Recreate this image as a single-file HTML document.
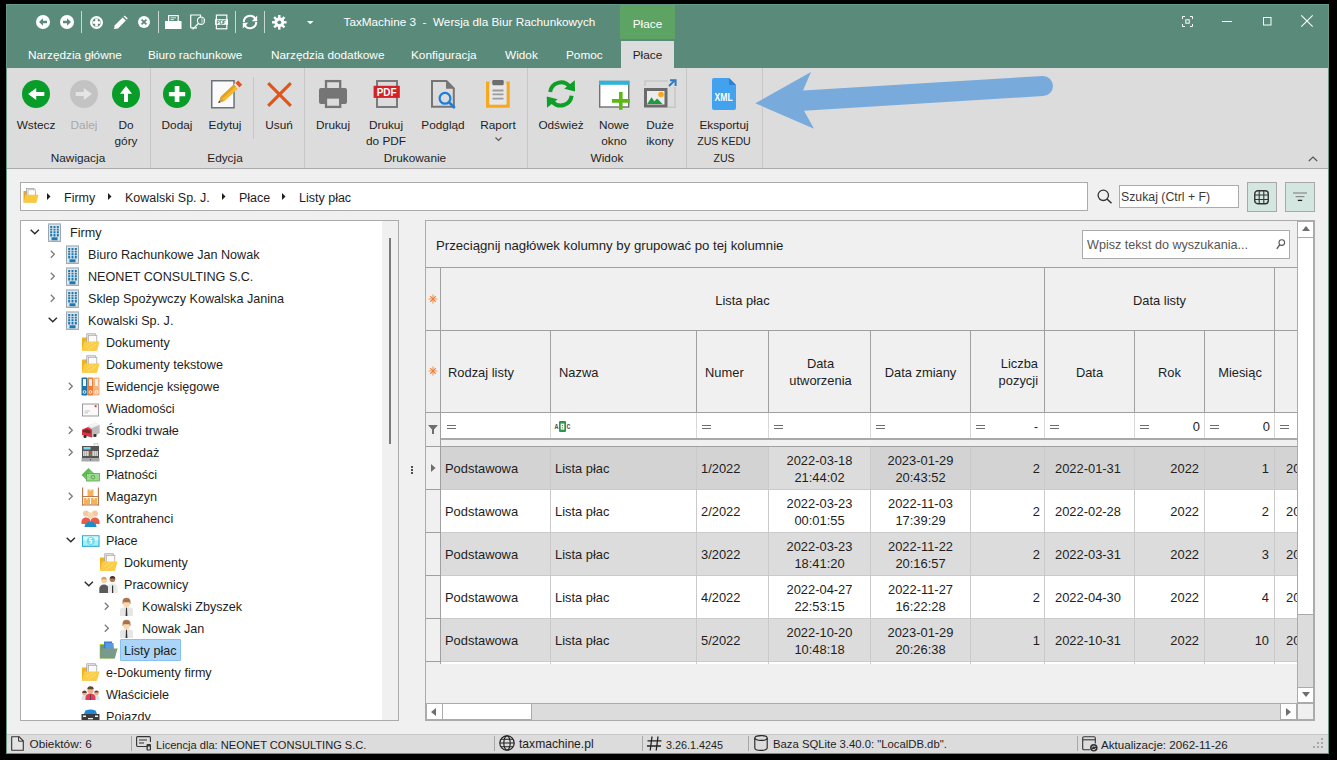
<!DOCTYPE html><html><head><meta charset="utf-8"><style>
html,body{margin:0;padding:0;width:1337px;height:760px;overflow:hidden;background:#000;}
.t{position:absolute;white-space:pre;font-family:"Liberation Sans",sans-serif;}
svg{overflow:visible}
</style></head><body>
<div style="position:absolute;left:6px;top:4px;width:1323px;height:750px;background:#f0f0f0;border:1px solid #66998a;box-sizing:border-box"></div>
<div style="position:absolute;left:7px;top:5px;width:1321px;height:63px;background:#5a8b7a;"></div>
<div style="position:absolute;left:620px;top:5px;width:55px;height:34px;background:#5ca364;"></div>
<div class="t" style="left:617.5px;width:60px;text-align:center;top:16.91px;font-size:11.8px;line-height:15px;color:#ffffff;">Płace</div>
<div style="position:absolute;left:621px;top:41px;width:53px;height:27px;background:#dcdcdc;"></div>
<div class="t" style="left:343.5px;top:14.43px;font-size:11.75px;line-height:15px;color:#ffffff;">TaxMachine 3  -  Wersja dla Biur Rachunkowych</div>
<div class="t" style="left:28px;top:48.41px;font-size:11.8px;line-height:15px;color:#ffffff;">Narzędzia główne</div>
<div class="t" style="left:148px;top:48.41px;font-size:11.8px;line-height:15px;color:#ffffff;">Biuro rachunkowe</div>
<div class="t" style="left:271px;top:48.41px;font-size:11.8px;line-height:15px;color:#ffffff;">Narzędzia dodatkowe</div>
<div class="t" style="left:411px;top:48.41px;font-size:11.8px;line-height:15px;color:#ffffff;">Konfiguracja</div>
<div class="t" style="left:505px;top:48.41px;font-size:11.8px;line-height:15px;color:#ffffff;">Widok</div>
<div class="t" style="left:566px;top:48.41px;font-size:11.8px;line-height:15px;color:#ffffff;">Pomoc</div>
<div class="t" style="left:617.5px;width:60px;text-align:center;top:48.41px;font-size:11.8px;line-height:15px;color:#1e1e1e;">Płace</div>
<svg style="position:absolute;left:36px;top:15px;" width="14" height="14" viewBox="0 0 14 14"><circle cx="7" cy="7" r="7" fill="#ffffff"/><path d="M3 7L7 3.2V5.8H11V8.2H7V10.8Z" fill="#5a8b7a"/></svg>
<svg style="position:absolute;left:60px;top:15px;" width="14" height="14" viewBox="0 0 14 14"><circle cx="7" cy="7" r="7" fill="#ffffff"/><path d="M11 7L7 3.2V5.8H3V8.2H7V10.8Z" fill="#5a8b7a"/></svg>
<div style="position:absolute;left:81px;top:11px;width:1px;height:22px;background:#c9d6d1;"></div>
<svg style="position:absolute;left:90px;top:16px;" width="13" height="13" viewBox="0 0 13 13"><circle cx="6.5" cy="6.5" r="5.4" fill="none" stroke="#ffffff" stroke-width="2.2"/><path d="M6.5 2.6V10.4M2.6 6.5H10.4" stroke="#ffffff" stroke-width="2.6"/></svg>
<svg style="position:absolute;left:114px;top:16px;" width="13" height="13" viewBox="0 0 13 13"><path d="M0 13L0.8 9.2L8.6 1.4L11.8 4.6L4 12.4Z" fill="#ffffff"/><path d="M9.6 0.4L10.6 -0.6L13.8 2.6L12.8 3.6Z" fill="#ffffff"/></svg>
<svg style="position:absolute;left:138px;top:16px;" width="13" height="13" viewBox="0 0 13 13"><circle cx="6" cy="6" r="6" fill="#ffffff"/><path d="M3.6 3.6L8.4 8.4M8.4 3.6L3.6 8.4" stroke="#5a8b7a" stroke-width="1.8"/></svg>
<div style="position:absolute;left:158px;top:11px;width:1px;height:22px;background:#c9d6d1;"></div>
<svg style="position:absolute;left:165px;top:14px;" width="17" height="16" viewBox="0 0 17 16"><rect x="3.6" y="1.6" width="9.6" height="8" fill="#5a8b7a" stroke="#ffffff" stroke-width="1.2"/><path d="M5.5 3.8H11M5.5 5.6H9M5.5 7.6H11" stroke="#ffffff" stroke-width="0.8"/><rect x="0" y="7" width="16.5" height="8" fill="#ffffff"/></svg>
<svg style="position:absolute;left:190px;top:14px;" width="16" height="16" viewBox="0 0 16 16"><path d="M0.7 13.8V1H10.5V3.5M7 13.8H0.7" fill="none" stroke="#ffffff" stroke-width="1.2"/><circle cx="11" cy="6.7" r="3.6" fill="#5a8b7a" stroke="#ffffff" stroke-width="1.2"/><path d="M11 3.5A3.2 3.2 0 0 1 11 9.9Z" fill="#8fb3a6"/><path d="M8.6 9.3L2.6 15.4" stroke="#ffffff" stroke-width="1.3"/></svg>
<svg style="position:absolute;left:215px;top:14px;" width="14" height="16" viewBox="0 0 14 16"><rect x="1.4" y="1.1" width="10.4" height="13.7" fill="none" stroke="#ffffff" stroke-width="1.2"/><rect x="0" y="5.2" width="13" height="5.6" fill="#ffffff"/><path d="M2.3 10V6.4H3.9A1 1 0 0 1 3.9 8.3H2.3M5.3 10V6.4H6.4A1.4 1.6 0 0 1 6.4 10Z M8.6 10V6.4H10.8M8.6 8.1H10.3" fill="none" stroke="#5a8b7a" stroke-width="0.9"/></svg>
<div style="position:absolute;left:235px;top:11px;width:1px;height:22px;background:#c9d6d1;"></div>
<svg style="position:absolute;left:242px;top:14px;" width="16" height="16" viewBox="0 0 16 16"><path d="M1.8 8A6.2 6.2 0 0 1 13.4 4.9M14.2 8A6.2 6.2 0 0 1 2.6 11.1" fill="none" stroke="#ffffff" stroke-width="2"/><path d="M15.2 1.5V7.3H9.8Z" fill="#ffffff"/><path d="M0.8 14.5V8.7H6.2Z" fill="#ffffff"/></svg>
<div style="position:absolute;left:264px;top:11px;width:1px;height:22px;background:#c9d6d1;"></div>
<svg style="position:absolute;left:272px;top:15px;" width="15" height="15" viewBox="0 0 15 15"><g fill="#ffffff"><rect x="6.1" y="0" width="2.4" height="4" transform="rotate(0 7.3 7.3)"/><rect x="6.1" y="0" width="2.4" height="4" transform="rotate(45 7.3 7.3)"/><rect x="6.1" y="0" width="2.4" height="4" transform="rotate(90 7.3 7.3)"/><rect x="6.1" y="0" width="2.4" height="4" transform="rotate(135 7.3 7.3)"/><rect x="6.1" y="0" width="2.4" height="4" transform="rotate(180 7.3 7.3)"/><rect x="6.1" y="0" width="2.4" height="4" transform="rotate(225 7.3 7.3)"/><rect x="6.1" y="0" width="2.4" height="4" transform="rotate(270 7.3 7.3)"/><rect x="6.1" y="0" width="2.4" height="4" transform="rotate(315 7.3 7.3)"/><circle cx="7.3" cy="7.3" r="4.9"/></g><circle cx="7.3" cy="7.3" r="1.9" fill="#5a8b7a"/></svg>
<svg style="position:absolute;left:307px;top:21px;" width="7" height="4" viewBox="0 0 7 4"><path d="M0 0H6.5L3.25 3.2Z" fill="#ffffff"/></svg>
<svg style="position:absolute;left:1182px;top:16px;" width="11" height="11" viewBox="0 0 11 11"><path d="M0.5 3V0.5H3M8 0.5H10.5V3M10.5 8V10.5H8M3 10.5H0.5V8" fill="none" stroke="#ffffff" stroke-width="1"/><rect x="3.8" y="3.8" width="3.4" height="3.4" fill="none" stroke="#ffffff" stroke-width="1"/></svg>
<div style="position:absolute;left:1222px;top:21px;width:10px;height:1px;background:#ffffff;"></div>
<svg style="position:absolute;left:1263px;top:17px;" width="9" height="9" viewBox="0 0 9 9"><rect x="0.5" y="0.5" width="7.5" height="7.5" fill="none" stroke="#ffffff" stroke-width="1"/></svg>
<svg style="position:absolute;left:1301px;top:15px;" width="12" height="12" viewBox="0 0 12 12"><path d="M0.3 0.3L11.7 11.7M11.7 0.3L0.3 11.7" stroke="#ffffff" stroke-width="1.1"/></svg>
<div style="position:absolute;left:7px;top:68px;width:1321px;height:100px;background:#dcdcdc;"></div>
<div style="position:absolute;left:7px;top:168px;width:1321px;height:1px;background:#ababab;"></div>
<div style="position:absolute;left:150px;top:68px;width:1px;height:100px;background:#c6c6c6;"></div>
<div style="position:absolute;left:304px;top:68px;width:1px;height:100px;background:#c6c6c6;"></div>
<div style="position:absolute;left:527px;top:68px;width:1px;height:100px;background:#c6c6c6;"></div>
<div style="position:absolute;left:686px;top:68px;width:1px;height:100px;background:#c6c6c6;"></div>
<div style="position:absolute;left:762px;top:68px;width:1px;height:100px;background:#c6c6c6;"></div>
<div style="position:absolute;left:253px;top:77px;width:1px;height:62px;background:#c6c6c6;"></div>
<div class="t" style="left:-9.0px;width:90px;text-align:center;top:118.41px;font-size:11.8px;line-height:15px;color:#1e1e1e;">Wstecz</div>
<div class="t" style="left:39.0px;width:90px;text-align:center;top:118.41px;font-size:11.8px;line-height:15px;color:#a8a8a8;">Dalej</div>
<div class="t" style="left:81.0px;width:90px;text-align:center;top:118.41px;font-size:11.8px;line-height:15px;color:#1e1e1e;">Do</div>
<div class="t" style="left:81.0px;width:90px;text-align:center;top:133.91px;font-size:11.8px;line-height:15px;color:#1e1e1e;">góry</div>
<div class="t" style="left:132.0px;width:90px;text-align:center;top:118.41px;font-size:11.8px;line-height:15px;color:#1e1e1e;">Dodaj</div>
<div class="t" style="left:180.0px;width:90px;text-align:center;top:118.41px;font-size:11.8px;line-height:15px;color:#1e1e1e;">Edytuj</div>
<div class="t" style="left:234.0px;width:90px;text-align:center;top:118.41px;font-size:11.8px;line-height:15px;color:#1e1e1e;">Usuń</div>
<div class="t" style="left:288.0px;width:90px;text-align:center;top:118.41px;font-size:11.8px;line-height:15px;color:#1e1e1e;">Drukuj</div>
<div class="t" style="left:341.0px;width:90px;text-align:center;top:118.41px;font-size:11.8px;line-height:15px;color:#1e1e1e;">Drukuj</div>
<div class="t" style="left:341.0px;width:90px;text-align:center;top:133.91px;font-size:11.8px;line-height:15px;color:#1e1e1e;">do PDF</div>
<div class="t" style="left:398.0px;width:90px;text-align:center;top:118.41px;font-size:11.8px;line-height:15px;color:#1e1e1e;">Podgląd</div>
<div class="t" style="left:453.0px;width:90px;text-align:center;top:118.41px;font-size:11.8px;line-height:15px;color:#1e1e1e;">Raport</div>
<div class="t" style="left:516.0px;width:90px;text-align:center;top:118.41px;font-size:11.8px;line-height:15px;color:#1e1e1e;">Odśwież</div>
<div class="t" style="left:569.0px;width:90px;text-align:center;top:118.41px;font-size:11.8px;line-height:15px;color:#1e1e1e;">Nowe</div>
<div class="t" style="left:569.0px;width:90px;text-align:center;top:133.91px;font-size:11.8px;line-height:15px;color:#1e1e1e;">okno</div>
<div class="t" style="left:615.0px;width:90px;text-align:center;top:118.41px;font-size:11.8px;line-height:15px;color:#1e1e1e;">Duże</div>
<div class="t" style="left:615.0px;width:90px;text-align:center;top:133.91px;font-size:11.8px;line-height:15px;color:#1e1e1e;">ikony</div>
<div class="t" style="left:679.0px;width:90px;text-align:center;top:118.41px;font-size:11.8px;line-height:15px;color:#1e1e1e;">Eksportuj</div>
<div class="t" style="left:679.0px;width:90px;text-align:center;top:133.53px;font-size:10.6px;line-height:14px;color:#1e1e1e;">ZUS KEDU</div>
<div class="t" style="left:18.0px;width:120px;text-align:center;top:151.41px;font-size:11.8px;line-height:15px;color:#1e1e1e;">Nawigacja</div>
<div class="t" style="left:165.0px;width:120px;text-align:center;top:151.41px;font-size:11.8px;line-height:15px;color:#1e1e1e;">Edycja</div>
<div class="t" style="left:355.0px;width:120px;text-align:center;top:151.41px;font-size:11.8px;line-height:15px;color:#1e1e1e;">Drukowanie</div>
<div class="t" style="left:547.0px;width:120px;text-align:center;top:151.41px;font-size:11.8px;line-height:15px;color:#1e1e1e;">Widok</div>
<div class="t" style="left:664.0px;width:120px;text-align:center;top:150.83px;font-size:10.6px;line-height:14px;color:#1e1e1e;">ZUS</div>
<svg style="position:absolute;left:22px;top:80px;" width="28" height="28" viewBox="0 0 28 28"><circle cx="14" cy="14" r="14" fill="#079d28"/><path d="M6.1 14L14.2 7.9V12H22.3V16H14.2V20.1Z" fill="#ffffff"/></svg>
<svg style="position:absolute;left:70px;top:80px;" width="28" height="28" viewBox="0 0 28 28"><circle cx="14" cy="14" r="14" fill="#c3c3c3"/><path d="M21.9 14L13.8 7.9V12H5.7V16H13.8V20.1Z" fill="#e4e4e4"/></svg>
<svg style="position:absolute;left:112px;top:80px;" width="28" height="28" viewBox="0 0 28 28"><circle cx="14" cy="14" r="14" fill="#079d28"/><path d="M14 6L20 13.7H16V22H12V13.7H8Z" fill="#ffffff"/></svg>
<svg style="position:absolute;left:163px;top:80px;" width="28" height="28" viewBox="0 0 28 28"><circle cx="14" cy="14" r="14" fill="#079d28"/><path d="M11.7 6H16.4V12H22.2V16.2H16.4V22H11.7V16.2H5.9V12H11.7Z" fill="#ffffff"/></svg>
<svg style="position:absolute;left:211px;top:80px;" width="30" height="29" viewBox="0 0 30 29"><rect x="0.75" y="0.75" width="22.3" height="27" fill="#fafafa" stroke="#6d7278" stroke-width="1.5"/><g transform="translate(29.2,2.6) rotate(137)"><rect x="0" y="-2.9" width="4" height="5.8" fill="#e8501e"/><rect x="4" y="-2.9" width="2" height="5.8" fill="#e8e8e8"/><rect x="6" y="-2.9" width="18" height="5.8" fill="#f6b92a"/><rect x="6" y="0.3" width="18" height="2.6" fill="#e4a21f"/><path d="M24 -2.9L30 0L24 2.9Z" fill="#d4a04a"/><path d="M27.8 -1.1L30 0L27.8 1.1Z" fill="#333"/></g></svg>
<svg style="position:absolute;left:267px;top:82px;" width="25" height="25" viewBox="0 0 25 25"><path d="M1.2 1.2L23.8 23.8M23.8 1.2L1.2 23.8" stroke="#e35419" stroke-width="3.1"/></svg>
<svg style="position:absolute;left:319px;top:80px;" width="28" height="28" viewBox="0 0 28 28"><rect x="7" y="1.1" width="14.2" height="9" fill="none" stroke="#757575" stroke-width="2.3"/><rect x="0" y="8" width="28" height="16" rx="2" fill="#757575"/><rect x="7" y="17.5" width="14.2" height="9.4" fill="#dcdcdc" stroke="#757575" stroke-width="2.3"/></svg>
<svg style="position:absolute;left:373px;top:80px;" width="28" height="28" viewBox="0 0 28 28"><rect x="4" y="1" width="20" height="26" fill="none" stroke="#7a7a7a" stroke-width="2"/><rect x="0.6" y="5.8" width="26.2" height="12.1" fill="#d42027"/><text x="13.7" y="15.8" font-family="Liberation Sans" font-weight="bold" font-size="10" fill="#ffffff" text-anchor="middle">PDF</text></svg>
<svg style="position:absolute;left:431px;top:80px;" width="26" height="30" viewBox="0 0 26 30"><path d="M1 1H15.5L22.8 8.3V26.8H1Z" fill="none" stroke="#757575" stroke-width="2"/><path d="M15 0L23.8 8.8H15Z" fill="#757575"/><circle cx="14" cy="18.3" r="5.4" fill="none" stroke="#1a7ee0" stroke-width="2.2"/><path d="M17.8 22.1L23.8 28" stroke="#1a7ee0" stroke-width="2.6"/></svg>
<svg style="position:absolute;left:486px;top:80px;" width="25" height="28" viewBox="0 0 25 28"><path d="M1.7 1.5V26.2H22.1V1.5" fill="none" stroke="#f9a81a" stroke-width="3.3"/><rect x="3.4" y="4" width="17" height="20.5" fill="#e7e7e7"/><rect x="6.3" y="0" width="11.4" height="5.2" rx="1.2" fill="#6e6e6e"/><path d="M6.5 10.5H17.5M6.5 14.4H17.5M6.5 18.6H17.5" stroke="#9b9b9b" stroke-width="1.8"/></svg>
<svg style="position:absolute;left:546px;top:79px;" width="30" height="30" viewBox="0 0 30 30"><path d="M4.2 13A11 11 0 0 1 23.5 7.2" fill="none" stroke="#0f9e27" stroke-width="4"/><path d="M25.6 16.8A11 11 0 0 1 6.3 22.6" fill="none" stroke="#0f9e27" stroke-width="4"/><path d="M18.2 9.8L29 12.5L28.8 1.3Z" fill="#0f9e27"/><path d="M11.6 20.2L0.8 17.5L1 28.7Z" fill="#0f9e27"/></svg>
<svg style="position:absolute;left:599px;top:80px;" width="32" height="31" viewBox="0 0 32 31"><rect x="0.7" y="1.5" width="29" height="25.5" fill="#ffffff" stroke="#707070" stroke-width="1.4"/><rect x="0" y="0.8" width="30.4" height="4" fill="#2cb5d9"/><path d="M21.8 12V29.8M12.9 20.9H30.8" stroke="#5cb814" stroke-width="3.6"/></svg>
<svg style="position:absolute;left:644px;top:80px;" width="33" height="29" viewBox="0 0 33 29"><path d="M1 6V1H24M31 7V27.2H24" fill="none" stroke="#c6c6c6" stroke-width="1.5"/><rect x="1.5" y="9.5" width="20.5" height="16.5" fill="#ececec" stroke="#6b6b6b" stroke-width="3"/><path d="M7.5 24H18.5L13.2 18.5Z" fill="#1e9b3c"/><path d="M3.2 24H12L7.6 17.2Z" fill="#1e9b3c"/><circle cx="17" cy="14.5" r="2.8" fill="#f9a81a"/><path d="M25 6L30.5 0.6M26 0.3H31.6V6" fill="none" stroke="#2f7cc0" stroke-width="2"/></svg>
<svg style="position:absolute;left:712px;top:78px;" width="24" height="32" viewBox="0 0 24 32"><path d="M2 0H17L24 7V30A2 2 0 0 1 22 32H2A2 2 0 0 1 0 30V2A2 2 0 0 1 2 0Z" fill="#42a2ee"/><path d="M17 0L24 7H17Z" fill="#2a84d6"/><text x="2.6" y="23.2" font-family="Liberation Sans" font-weight="bold" font-size="10.2" fill="#ffffff" textLength="18" lengthAdjust="spacingAndGlyphs">XML</text></svg>
<svg style="position:absolute;left:495px;top:137px;" width="7" height="4" viewBox="0 0 7 4"><path d="M0.5 0.5L3.5 3.5L6.5 0.5" fill="none" stroke="#555" stroke-width="1.1"/></svg>
<svg style="position:absolute;left:740px;top:60px;" width="330" height="80" viewBox="0 0 330 80"><path d="M15.3 43.3L71 12L63 30.4L303 16A10 10 0 0 1 303 36L64 50.7L74 68.7Z" fill="#78aadc"/></svg>
<svg style="position:absolute;left:1308px;top:156px;" width="10" height="6" viewBox="0 0 10 6"><path d="M0.8 5L5 1L9.2 5" fill="none" stroke="#555" stroke-width="1.2"/></svg>
<div style="position:absolute;left:20px;top:182px;width:1068px;height:29px;background:#ffffff;border:1px solid #ababab;box-sizing:border-box"></div>
<div class="t" style="left:64px;top:189.87px;font-size:12.5px;line-height:16px;color:#1e1e1e;">Firmy</div>
<div class="t" style="left:125px;top:189.87px;font-size:12.5px;line-height:16px;color:#1e1e1e;">Kowalski Sp. J.</div>
<div class="t" style="left:239px;top:189.87px;font-size:12.5px;line-height:16px;color:#1e1e1e;">Płace</div>
<div class="t" style="left:299px;top:189.87px;font-size:12.5px;line-height:16px;color:#1e1e1e;">Listy płac</div>
<div style="position:absolute;left:1119px;top:185px;width:120px;height:23px;background:#ffffff;border:1px solid #ababab;box-sizing:border-box"></div>
<div class="t" style="left:1121px;top:188.74px;font-size:12.3px;line-height:16px;color:#3a3a3a;">Szukaj (Ctrl + F)</div>
<div style="position:absolute;left:1247px;top:182px;width:30px;height:30px;background:#d3e6df;border:1px solid #a8a8a8;box-sizing:border-box"></div>
<div style="position:absolute;left:1285px;top:182px;width:30px;height:30px;background:#d3e6df;border:1px solid #a8a8a8;box-sizing:border-box"></div>
<div style="position:absolute;left:20px;top:220px;width:379px;height:501px;background:#ffffff;border:1px solid #ababab;box-sizing:border-box"></div>
<div style="position:absolute;left:382px;top:221px;width:16px;height:499px;background:#f0f0f0;"></div>
<div style="position:absolute;left:389px;top:238px;width:2px;height:206px;background:#7a7a7a;"></div>
<div style="position:absolute;left:21px;top:221px;width:361px;height:499px;overflow:hidden">
<div class="t" style="left:49px;top:3.63px;font-size:12.6px;line-height:16px;color:#1e1e1e;">Firmy</div>
<svg style="position:absolute;left:24px;top:1.5px" width="19" height="19" viewBox="0 0 19 19"><rect x="3" y="0.5" width="13" height="1.2" fill="#8a9aa4"/><rect x="3.5" y="1.7" width="12" height="15.5" fill="#dfe7ec"/><rect x="3" y="1.7" width="1" height="16" fill="#9aa6ae"/><rect x="15" y="1.7" width="1" height="16" fill="#9aa6ae"/><g fill="#1b78b5"><rect x="5.2" y="3" width="2" height="10.5"/><rect x="8.5" y="3" width="2" height="10.5"/><rect x="11.8" y="3" width="2" height="10.5"/></g><g fill="#dfe7ec"><rect x="4" y="5" width="11" height="0.7"/><rect x="4" y="7.5" width="11" height="0.7"/><rect x="4" y="10" width="11" height="0.7"/></g><rect x="6.5" y="14.3" width="6" height="3" fill="#1b78b5"/><rect x="3" y="17.6" width="13" height="1.2" fill="#8a9aa4"/></svg>
<svg style="position:absolute;left:9.0px;top:8px;" width="10" height="6" viewBox="0 0 10 6"><path d="M0.7 0.8L4.8 4.8L8.9 0.8" fill="none" stroke="#2a2a2a" stroke-width="1.4"/></svg>
<div class="t" style="left:67px;top:25.63px;font-size:12.6px;line-height:16px;color:#1e1e1e;">Biuro Rachunkowe Jan Nowak</div>
<svg style="position:absolute;left:42px;top:23.5px" width="19" height="19" viewBox="0 0 19 19"><rect x="3" y="0.5" width="13" height="1.2" fill="#8a9aa4"/><rect x="3.5" y="1.7" width="12" height="15.5" fill="#dfe7ec"/><rect x="3" y="1.7" width="1" height="16" fill="#9aa6ae"/><rect x="15" y="1.7" width="1" height="16" fill="#9aa6ae"/><g fill="#1b78b5"><rect x="5.2" y="3" width="2" height="10.5"/><rect x="8.5" y="3" width="2" height="10.5"/><rect x="11.8" y="3" width="2" height="10.5"/></g><g fill="#dfe7ec"><rect x="4" y="5" width="11" height="0.7"/><rect x="4" y="7.5" width="11" height="0.7"/><rect x="4" y="10" width="11" height="0.7"/></g><rect x="6.5" y="14.3" width="6" height="3" fill="#1b78b5"/><rect x="3" y="17.6" width="13" height="1.2" fill="#8a9aa4"/></svg>
<svg style="position:absolute;left:29.0px;top:29px;" width="6" height="9" viewBox="0 0 6 9"><path d="M0.8 0.8L4.3 4.3L0.8 7.8" fill="none" stroke="#7a7a7a" stroke-width="1.3"/></svg>
<div class="t" style="left:67px;top:47.63px;font-size:12.6px;line-height:16px;color:#1e1e1e;">NEONET CONSULTING S.C.</div>
<svg style="position:absolute;left:42px;top:45.5px" width="19" height="19" viewBox="0 0 19 19"><rect x="3" y="0.5" width="13" height="1.2" fill="#8a9aa4"/><rect x="3.5" y="1.7" width="12" height="15.5" fill="#dfe7ec"/><rect x="3" y="1.7" width="1" height="16" fill="#9aa6ae"/><rect x="15" y="1.7" width="1" height="16" fill="#9aa6ae"/><g fill="#1b78b5"><rect x="5.2" y="3" width="2" height="10.5"/><rect x="8.5" y="3" width="2" height="10.5"/><rect x="11.8" y="3" width="2" height="10.5"/></g><g fill="#dfe7ec"><rect x="4" y="5" width="11" height="0.7"/><rect x="4" y="7.5" width="11" height="0.7"/><rect x="4" y="10" width="11" height="0.7"/></g><rect x="6.5" y="14.3" width="6" height="3" fill="#1b78b5"/><rect x="3" y="17.6" width="13" height="1.2" fill="#8a9aa4"/></svg>
<svg style="position:absolute;left:29.0px;top:51px;" width="6" height="9" viewBox="0 0 6 9"><path d="M0.8 0.8L4.3 4.3L0.8 7.8" fill="none" stroke="#7a7a7a" stroke-width="1.3"/></svg>
<div class="t" style="left:67px;top:69.63px;font-size:12.6px;line-height:16px;color:#1e1e1e;">Sklep Spożywczy Kowalska Janina</div>
<svg style="position:absolute;left:42px;top:67.5px" width="19" height="19" viewBox="0 0 19 19"><rect x="3" y="0.5" width="13" height="1.2" fill="#8a9aa4"/><rect x="3.5" y="1.7" width="12" height="15.5" fill="#dfe7ec"/><rect x="3" y="1.7" width="1" height="16" fill="#9aa6ae"/><rect x="15" y="1.7" width="1" height="16" fill="#9aa6ae"/><g fill="#1b78b5"><rect x="5.2" y="3" width="2" height="10.5"/><rect x="8.5" y="3" width="2" height="10.5"/><rect x="11.8" y="3" width="2" height="10.5"/></g><g fill="#dfe7ec"><rect x="4" y="5" width="11" height="0.7"/><rect x="4" y="7.5" width="11" height="0.7"/><rect x="4" y="10" width="11" height="0.7"/></g><rect x="6.5" y="14.3" width="6" height="3" fill="#1b78b5"/><rect x="3" y="17.6" width="13" height="1.2" fill="#8a9aa4"/></svg>
<svg style="position:absolute;left:29.0px;top:73px;" width="6" height="9" viewBox="0 0 6 9"><path d="M0.8 0.8L4.3 4.3L0.8 7.8" fill="none" stroke="#7a7a7a" stroke-width="1.3"/></svg>
<div class="t" style="left:67px;top:91.63px;font-size:12.6px;line-height:16px;color:#1e1e1e;">Kowalski Sp. J.</div>
<svg style="position:absolute;left:42px;top:89.5px" width="19" height="19" viewBox="0 0 19 19"><rect x="3" y="0.5" width="13" height="1.2" fill="#8a9aa4"/><rect x="3.5" y="1.7" width="12" height="15.5" fill="#dfe7ec"/><rect x="3" y="1.7" width="1" height="16" fill="#9aa6ae"/><rect x="15" y="1.7" width="1" height="16" fill="#9aa6ae"/><g fill="#1b78b5"><rect x="5.2" y="3" width="2" height="10.5"/><rect x="8.5" y="3" width="2" height="10.5"/><rect x="11.8" y="3" width="2" height="10.5"/></g><g fill="#dfe7ec"><rect x="4" y="5" width="11" height="0.7"/><rect x="4" y="7.5" width="11" height="0.7"/><rect x="4" y="10" width="11" height="0.7"/></g><rect x="6.5" y="14.3" width="6" height="3" fill="#1b78b5"/><rect x="3" y="17.6" width="13" height="1.2" fill="#8a9aa4"/></svg>
<svg style="position:absolute;left:27.0px;top:96px;" width="10" height="6" viewBox="0 0 10 6"><path d="M0.7 0.8L4.8 4.8L8.9 0.8" fill="none" stroke="#2a2a2a" stroke-width="1.4"/></svg>
<div class="t" style="left:85px;top:113.63px;font-size:12.6px;line-height:16px;color:#1e1e1e;">Dokumenty</div>
<svg style="position:absolute;left:60px;top:111.5px" width="19" height="19" viewBox="0 0 19 19"><path d="M1 4.5H6.5L7.5 6H15V17.5H1Z" fill="#f2b21e"/><rect x="5.8" y="0.8" width="8.5" height="9" fill="#f4f4f4" stroke="#a0a0a0" stroke-width="0.8"/><rect x="7.3" y="2.3" width="8.5" height="8" fill="#fbfbfb" stroke="#a8a8a8" stroke-width="0.8"/><path d="M3.3 8.5H18.5L16 17.8H0.8Z" fill="#fbcd45"/><path d="M5 14L12 9.5M7 16.5L15 11" stroke="#fde08a" stroke-width="0.8"/></svg>
<div class="t" style="left:85px;top:135.63px;font-size:12.6px;line-height:16px;color:#1e1e1e;">Dokumenty tekstowe</div>
<svg style="position:absolute;left:60px;top:133.5px" width="19" height="19" viewBox="0 0 19 19"><path d="M1 4.5H6.5L7.5 6H15V17.5H1Z" fill="#f2b21e"/><rect x="5.8" y="0.8" width="8.5" height="9" fill="#f4f4f4" stroke="#a0a0a0" stroke-width="0.8"/><rect x="7.3" y="2.3" width="8.5" height="8" fill="#fbfbfb" stroke="#a8a8a8" stroke-width="0.8"/><path d="M3.3 8.5H18.5L16 17.8H0.8Z" fill="#fbcd45"/><path d="M5 14L12 9.5M7 16.5L15 11" stroke="#fde08a" stroke-width="0.8"/></svg>
<div class="t" style="left:85px;top:157.63px;font-size:12.6px;line-height:16px;color:#1e1e1e;">Ewidencje księgowe</div>
<svg style="position:absolute;left:60px;top:155.5px" width="19" height="19" viewBox="0 0 19 19"><rect x="0.5" y="0.5" width="6" height="18" rx="1" fill="#1f74a6"/><rect x="6.5" y="0.5" width="6" height="18" rx="1" fill="#f07a36"/><rect x="12.5" y="0.5" width="6" height="18" rx="1" fill="#f6b47a"/><g fill="#e8f4fb"><rect x="2" y="2" width="3" height="7"/><rect x="8" y="2" width="3" height="7"/><rect x="14" y="2" width="3" height="7"/></g><g fill="none" stroke="#ffffff" stroke-width="0.9"><circle cx="3.5" cy="15" r="1.4"/><circle cx="9.5" cy="15" r="1.4"/><circle cx="15.5" cy="15" r="1.4"/></g></svg>
<svg style="position:absolute;left:47.0px;top:161px;" width="6" height="9" viewBox="0 0 6 9"><path d="M0.8 0.8L4.3 4.3L0.8 7.8" fill="none" stroke="#7a7a7a" stroke-width="1.3"/></svg>
<div class="t" style="left:85px;top:179.63px;font-size:12.6px;line-height:16px;color:#1e1e1e;">Wiadomości</div>
<svg style="position:absolute;left:60px;top:177.5px" width="19" height="19" viewBox="0 0 19 19"><rect x="1.5" y="5" width="16" height="12" fill="#fafafa" stroke="#9a9a9a" stroke-width="1"/><path d="M3.5 12H9M3.5 13.8H7" stroke="#c4c4c4" stroke-width="1"/><rect x="13.6" y="6.2" width="2" height="2" fill="#e83a2a"/></svg>
<div class="t" style="left:85px;top:201.63px;font-size:12.6px;line-height:16px;color:#1e1e1e;">Środki trwałe</div>
<svg style="position:absolute;left:60px;top:199.5px" width="19" height="19" viewBox="0 0 19 19"><path d="M7 4.5L14.5 1.5L18.5 4V12L11 16.5Z" fill="#d8d8d8"/><path d="M7 4.5L14.5 1.5L18.5 4L11 7Z" fill="#f2f2f2"/><path d="M11 7L18.5 4V12L11 16.5Z" fill="#bdbdbd"/><path d="M1 8.5L7 6L11 8.5V16.5L1 14Z" fill="#e0313e"/><path d="M1.8 9.5L6 8L9.5 9.8L9.5 12.5L1.8 11Z" fill="#6a2a30"/><rect x="2.5" y="14" width="3" height="3" rx="1" fill="#333"/><rect x="12.5" y="13" width="3" height="3" rx="1" fill="#333"/></svg>
<svg style="position:absolute;left:47.0px;top:205px;" width="6" height="9" viewBox="0 0 6 9"><path d="M0.8 0.8L4.3 4.3L0.8 7.8" fill="none" stroke="#7a7a7a" stroke-width="1.3"/></svg>
<div class="t" style="left:85px;top:223.63px;font-size:12.6px;line-height:16px;color:#1e1e1e;">Sprzedaż</div>
<svg style="position:absolute;left:60px;top:221.5px" width="19" height="19" viewBox="0 0 19 19"><rect x="13" y="0.5" width="4" height="5" fill="#f2f2f2" stroke="#bbb" stroke-width="0.6"/><rect x="1" y="3" width="17" height="12" fill="#555555"/><rect x="2.5" y="4" width="7" height="2.5" fill="#7fd4ee"/><g fill="#f2f2f2"><rect x="2.2" y="8" width="1.4" height="5"/><rect x="4.2" y="8" width="1.4" height="5"/><rect x="6.2" y="8" width="1.4" height="5"/><rect x="11.4" y="8" width="1.4" height="5"/><rect x="13.4" y="8" width="1.4" height="5"/><rect x="15.4" y="8" width="1.4" height="5"/></g><rect x="8.4" y="8" width="2.2" height="5" fill="#e84a30"/><rect x="9.2" y="10" width="1.4" height="3" fill="#3aa04a"/><rect x="0.5" y="15" width="18" height="3.5" fill="#a8a8a8"/><rect x="9" y="16.3" width="1" height="1" fill="#333"/></svg>
<svg style="position:absolute;left:47.0px;top:227px;" width="6" height="9" viewBox="0 0 6 9"><path d="M0.8 0.8L4.3 4.3L0.8 7.8" fill="none" stroke="#7a7a7a" stroke-width="1.3"/></svg>
<div class="t" style="left:85px;top:245.63px;font-size:12.6px;line-height:16px;color:#1e1e1e;">Płatności</div>
<svg style="position:absolute;left:60px;top:243.5px" width="19" height="19" viewBox="0 0 19 19"><path d="M0.5 10L7.5 3L13 8.5L6 15.5Z" fill="#63b85a"/><path d="M3 12L10 5.5L15 10L8 16.5Z" fill="#78c86e"/><rect x="5.5" y="8.5" width="13" height="7.5" fill="#9ad98e" stroke="#57a84e" stroke-width="0.8"/><circle cx="12" cy="12.2" r="1.8" fill="none" stroke="#4e9e46" stroke-width="0.8"/></svg>
<div class="t" style="left:85px;top:267.63px;font-size:12.6px;line-height:16px;color:#1e1e1e;">Magazyn</div>
<svg style="position:absolute;left:60px;top:265.5px" width="19" height="19" viewBox="0 0 19 19"><rect x="1" y="0.5" width="1.2" height="18" fill="#b87a52"/><rect x="16.8" y="0.5" width="1.2" height="18" fill="#b87a52"/><rect x="1" y="9" width="17" height="1" fill="#b87a52"/><rect x="1" y="17.3" width="17" height="1.2" fill="#b87a52"/><rect x="6.5" y="2.5" width="6" height="6.5" fill="#f5b158"/><rect x="3" y="11" width="6" height="6.3" fill="#f5b158"/><rect x="10" y="11" width="6" height="6.3" fill="#f5b158"/><g fill="#fde0b8"><rect x="8.5" y="2.5" width="2" height="1.5"/><rect x="5" y="11" width="2" height="1.5"/><rect x="12" y="11" width="2" height="1.5"/></g></svg>
<svg style="position:absolute;left:47.0px;top:271px;" width="6" height="9" viewBox="0 0 6 9"><path d="M0.8 0.8L4.3 4.3L0.8 7.8" fill="none" stroke="#7a7a7a" stroke-width="1.3"/></svg>
<div class="t" style="left:85px;top:289.63px;font-size:12.6px;line-height:16px;color:#1e1e1e;">Kontrahenci</div>
<svg style="position:absolute;left:60px;top:287.5px" width="19" height="19" viewBox="0 0 19 19"><circle cx="5" cy="4.5" r="3" fill="#f3c9a0"/><circle cx="14" cy="4.5" r="3" fill="#f3c9a0"/><path d="M0.5 14A4.5 4.5 0 0 1 9.5 12V15H0.5Z" fill="#e85a4a"/><path d="M9.5 12A4.5 4.5 0 0 1 18.5 14V15H9.5Z" fill="#e85a4a"/><circle cx="9.5" cy="6.5" r="3.3" fill="#f8d6b0"/><path d="M3.5 18A6 5.5 0 0 1 15.5 18Z" fill="#1e8ec8"/></svg>
<div class="t" style="left:85px;top:311.63px;font-size:12.6px;line-height:16px;color:#1e1e1e;">Płace</div>
<svg style="position:absolute;left:60px;top:309.5px" width="19" height="19" viewBox="0 0 19 19"><rect x="1.5" y="4.8" width="16.5" height="10.5" fill="#a8eef4" stroke="#2aa8d8" stroke-width="1.1"/><rect x="2.1" y="5.4" width="15.3" height="4" fill="#d8f8fb"/><circle cx="9.8" cy="10" r="4" fill="#6edfea"/><path d="M11 7.5H8.8V9.6H10.6V12H8.4" fill="none" stroke="#ffffff" stroke-width="1.2"/></svg>
<svg style="position:absolute;left:45.0px;top:316px;" width="10" height="6" viewBox="0 0 10 6"><path d="M0.7 0.8L4.8 4.8L8.9 0.8" fill="none" stroke="#2a2a2a" stroke-width="1.4"/></svg>
<div class="t" style="left:103px;top:333.63px;font-size:12.6px;line-height:16px;color:#1e1e1e;">Dokumenty</div>
<svg style="position:absolute;left:78px;top:331.5px" width="19" height="19" viewBox="0 0 19 19"><path d="M1 4.5H6.5L7.5 6H15V17.5H1Z" fill="#f2b21e"/><rect x="5.8" y="0.8" width="8.5" height="9" fill="#f4f4f4" stroke="#a0a0a0" stroke-width="0.8"/><rect x="7.3" y="2.3" width="8.5" height="8" fill="#fbfbfb" stroke="#a8a8a8" stroke-width="0.8"/><path d="M3.3 8.5H18.5L16 17.8H0.8Z" fill="#fbcd45"/><path d="M5 14L12 9.5M7 16.5L15 11" stroke="#fde08a" stroke-width="0.8"/></svg>
<div class="t" style="left:103px;top:355.63px;font-size:12.6px;line-height:16px;color:#1e1e1e;">Pracownicy</div>
<svg style="position:absolute;left:78px;top:353.5px" width="19" height="19" viewBox="0 0 19 19"><circle cx="5" cy="5.5" r="2.8" fill="#f6d2a8"/><path d="M2.2 4.5A2.8 2.8 0 0 1 7.8 4.5Z" fill="#d9a460"/><path d="M0.3 18V13.5A4.7 4 0 0 1 9.7 13.5V18Z" fill="#5a5a5a"/><circle cx="13.5" cy="4.2" r="2.8" fill="#b07850"/><path d="M10.7 3.5A2.8 2.5 0 0 1 16.3 3.5Z" fill="#4a3030"/><path d="M9 18V12.5A4.5 4 0 0 1 18.5 12.5V18Z" fill="#eaeaea"/><rect x="13" y="10.5" width="1.2" height="7.5" fill="#333"/></svg>
<svg style="position:absolute;left:63.0px;top:360px;" width="10" height="6" viewBox="0 0 10 6"><path d="M0.7 0.8L4.8 4.8L8.9 0.8" fill="none" stroke="#2a2a2a" stroke-width="1.4"/></svg>
<div class="t" style="left:121px;top:377.63px;font-size:12.6px;line-height:16px;color:#1e1e1e;">Kowalski Zbyszek</div>
<svg style="position:absolute;left:96px;top:375.5px" width="19" height="19" viewBox="0 0 19 19"><path d="M5.5 5A4 4.2 0 0 1 13.5 5V7H5.5Z" fill="#b07a52"/><ellipse cx="9.5" cy="6.8" rx="3.3" ry="3.6" fill="#f8d8b4"/><path d="M6.2 4.5A3.3 2 0 0 1 12.8 4.5L12.8 5.2H6.2Z" fill="#a8704a"/><path d="M3 19V13.5A3.5 3 0 0 1 6.5 10.5H12.5A3.5 3 0 0 1 16 13.5V19Z" fill="#e6e6e6"/><path d="M9 10.8H10L10.4 19H8.6Z" fill="#333"/></svg>
<svg style="position:absolute;left:83.0px;top:381px;" width="6" height="9" viewBox="0 0 6 9"><path d="M0.8 0.8L4.3 4.3L0.8 7.8" fill="none" stroke="#7a7a7a" stroke-width="1.3"/></svg>
<div class="t" style="left:121px;top:399.63px;font-size:12.6px;line-height:16px;color:#1e1e1e;">Nowak Jan</div>
<svg style="position:absolute;left:96px;top:397.5px" width="19" height="19" viewBox="0 0 19 19"><path d="M5.5 5A4 4.2 0 0 1 13.5 5V7H5.5Z" fill="#b07a52"/><ellipse cx="9.5" cy="6.8" rx="3.3" ry="3.6" fill="#f8d8b4"/><path d="M6.2 4.5A3.3 2 0 0 1 12.8 4.5L12.8 5.2H6.2Z" fill="#a8704a"/><path d="M3 19V13.5A3.5 3 0 0 1 6.5 10.5H12.5A3.5 3 0 0 1 16 13.5V19Z" fill="#e6e6e6"/><path d="M9 10.8H10L10.4 19H8.6Z" fill="#333"/></svg>
<svg style="position:absolute;left:83.0px;top:403px;" width="6" height="9" viewBox="0 0 6 9"><path d="M0.8 0.8L4.3 4.3L0.8 7.8" fill="none" stroke="#7a7a7a" stroke-width="1.3"/></svg>
<div style="position:absolute;left:99px;top:418px;width:61px;height:22px;background:#aad5f8;border:1px solid #86c1ef;box-sizing:border-box;border-radius:1px"></div>
<div class="t" style="left:103px;top:421.63px;font-size:12.6px;line-height:16px;color:#1e1e1e;">Listy płac</div>
<svg style="position:absolute;left:78px;top:419.5px" width="19" height="19" viewBox="0 0 19 19"><path d="M0.5 3H6L7 4.5H15V17.5H0.5Z" fill="#c8ee10"/><path d="M1.2 3.8H5.8L6.8 5.2H14.4V17H1.2Z" fill="#6e9080"/><rect x="5" y="0.5" width="8" height="9" fill="#3b7fd0"/><rect x="6.5" y="2" width="8" height="8" fill="#5a9ae0"/><path d="M3 7.5H18.5L15.8 17.5H1Z" fill="#7a9a8c"/><path d="M16.5 7.2H18.8L18.5 8.2Z" fill="#c8ee10"/></svg>
<div class="t" style="left:85px;top:443.63px;font-size:12.6px;line-height:16px;color:#1e1e1e;">e-Dokumenty firmy</div>
<svg style="position:absolute;left:60px;top:441.5px" width="19" height="19" viewBox="0 0 19 19"><path d="M1 4.5H6.5L7.5 6H15V17.5H1Z" fill="#f2b21e"/><rect x="5.8" y="0.8" width="8.5" height="9" fill="#f4f4f4" stroke="#a0a0a0" stroke-width="0.8"/><rect x="7.3" y="2.3" width="8.5" height="8" fill="#fbfbfb" stroke="#a8a8a8" stroke-width="0.8"/><path d="M3.3 8.5H18.5L16 17.8H0.8Z" fill="#fbcd45"/><path d="M5 14L12 9.5M7 16.5L15 11" stroke="#fde08a" stroke-width="0.8"/></svg>
<div class="t" style="left:85px;top:465.63px;font-size:12.6px;line-height:16px;color:#1e1e1e;">Właściciele</div>
<svg style="position:absolute;left:60px;top:463.5px" width="19" height="19" viewBox="0 0 19 19"><circle cx="3.5" cy="8.5" r="2.2" fill="#e8b088"/><path d="M1.2 8A2.3 2.6 0 0 1 5.8 8Z" fill="#6a4030"/><path d="M0.5 15V13A3 2.5 0 0 1 6.5 13V15Z" fill="#d8e4ee"/><circle cx="15.5" cy="8.5" r="2.2" fill="#e8b088"/><path d="M13.2 7.5A2.3 2 0 0 1 17.8 7.5Z" fill="#6a4030"/><path d="M12.5 15V13A3 2.5 0 0 1 18.5 13V15Z" fill="#d8e4ee"/><ellipse cx="9.5" cy="5.2" rx="3" ry="3.4" fill="#eab088"/><path d="M6.3 4.2A3.2 3 0 0 1 12.7 4.2Z" fill="#6a4030"/><path d="M4.5 15V12.5A4 3.3 0 0 1 14.5 12.5V15Z" fill="#e83a5a"/><rect x="9.1" y="9.5" width="0.9" height="5.5" fill="#444"/></svg>
<div class="t" style="left:85px;top:487.63px;font-size:12.6px;line-height:16px;color:#1e1e1e;">Pojazdy</div>
<svg style="position:absolute;left:60px;top:485.5px" width="19" height="19" viewBox="0 0 19 19"><path d="M2.5 8L4.5 3.5Q9.5 1.5 14.5 3.5L16.5 8Z" fill="#2088d8"/><path d="M0.5 7H18.5V14H0.5Z" fill="#3c3c3c"/><rect x="2" y="8.5" width="3" height="1.5" fill="#f0f0f0"/><rect x="14" y="8.5" width="3" height="1.5" fill="#f0f0f0"/><rect x="7" y="11" width="5" height="1.3" fill="#f0f0f0"/></svg>
</div>
<div style="position:absolute;left:425px;top:220px;width:890px;height:501px;background:#f0f0f0;border:1px solid #ababab;box-sizing:border-box"></div>
<div style="position:absolute;left:426px;top:267px;width:871px;height:1px;background:#a0a0a0;"></div>
<div class="t" style="left:436px;top:236.93px;font-size:13.2px;line-height:17px;color:#1e1e1e;">Przeciągnij nagłówek kolumny by grupować po tej kolumnie</div>
<div style="position:absolute;left:1082px;top:230px;width:208px;height:29px;background:#ffffff;border:1px solid #ababab;box-sizing:border-box"></div>
<div class="t" style="left:1087px;top:236.63px;font-size:12.6px;line-height:16px;color:#555555;">Wpisz tekst do wyszukania...</div>
<div style="position:absolute;left:426px;top:268px;width:871px;height:435px;overflow:hidden">
<div style="position:absolute;left:0px;top:0px;width:871px;height:145px;background:#f0f0f0;"></div>
<div style="position:absolute;left:0px;top:62px;width:871px;height:1px;background:#a0a0a0;"></div>
<div style="position:absolute;left:0px;top:144px;width:871px;height:1px;background:#a0a0a0;"></div>
<div style="position:absolute;left:14px;top:0px;width:1px;height:396px;background:#a0a0a0;"></div>
<div style="position:absolute;left:124px;top:63px;width:1px;height:81px;background:#a0a0a0;"></div>
<div style="position:absolute;left:270px;top:63px;width:1px;height:81px;background:#a0a0a0;"></div>
<div style="position:absolute;left:342px;top:63px;width:1px;height:81px;background:#a0a0a0;"></div>
<div style="position:absolute;left:444px;top:63px;width:1px;height:81px;background:#a0a0a0;"></div>
<div style="position:absolute;left:544px;top:63px;width:1px;height:81px;background:#a0a0a0;"></div>
<div style="position:absolute;left:708px;top:63px;width:1px;height:81px;background:#a0a0a0;"></div>
<div style="position:absolute;left:778px;top:63px;width:1px;height:81px;background:#a0a0a0;"></div>
<div style="position:absolute;left:618px;top:0px;width:1px;height:145px;background:#a0a0a0;"></div>
<div style="position:absolute;left:848px;top:0px;width:1px;height:145px;background:#a0a0a0;"></div>
<div class="t" style="left:216.5px;width:200px;text-align:center;top:24.03px;font-size:12.9px;line-height:17px;color:#1e1e1e;">Lista płac</div>
<div class="t" style="left:633.5px;width:200px;text-align:center;top:24.03px;font-size:12.9px;line-height:17px;color:#1e1e1e;">Data listy</div>
<div class="t" style="left:22px;top:96.03px;font-size:12.9px;line-height:17px;color:#1e1e1e;">Rodzaj listy</div>
<div class="t" style="left:133px;top:96.03px;font-size:12.9px;line-height:17px;color:#1e1e1e;">Nazwa</div>
<div class="t" style="left:279px;top:96.03px;font-size:12.9px;line-height:17px;color:#1e1e1e;">Numer</div>
<div class="t" style="left:344.5px;width:100px;text-align:center;top:87.03px;font-size:12.9px;line-height:17px;color:#1e1e1e;">Data</div>
<div class="t" style="left:344.5px;width:100px;text-align:center;top:104.03px;font-size:12.9px;line-height:17px;color:#1e1e1e;">utworzenia</div>
<div class="t" style="left:444.5px;width:100px;text-align:center;top:96.03px;font-size:12.9px;line-height:17px;color:#1e1e1e;">Data zmiany</div>
<div class="t" style="left:512px;width:100px;text-align:right;top:87.03px;font-size:12.9px;line-height:17px;color:#1e1e1e;">Liczba</div>
<div class="t" style="left:512px;width:100px;text-align:right;top:104.03px;font-size:12.9px;line-height:17px;color:#1e1e1e;">pozycji</div>
<div class="t" style="left:618.5px;width:90px;text-align:center;top:96.03px;font-size:12.9px;line-height:17px;color:#1e1e1e;">Data</div>
<div class="t" style="left:708.5px;width:70px;text-align:center;top:96.03px;font-size:12.9px;line-height:17px;color:#1e1e1e;">Rok</div>
<div class="t" style="left:779.0px;width:70px;text-align:center;top:96.03px;font-size:12.9px;line-height:17px;color:#1e1e1e;">Miesiąc</div>
<div style="position:absolute;left:15px;top:145px;width:856px;height:25px;background:#ffffff;"></div>
<div style="position:absolute;left:124px;top:145px;width:1px;height:25px;background:#d8d8d8;"></div>
<div style="position:absolute;left:270px;top:145px;width:1px;height:25px;background:#d8d8d8;"></div>
<div style="position:absolute;left:342px;top:145px;width:1px;height:25px;background:#d8d8d8;"></div>
<div style="position:absolute;left:444px;top:145px;width:1px;height:25px;background:#d8d8d8;"></div>
<div style="position:absolute;left:544px;top:145px;width:1px;height:25px;background:#d8d8d8;"></div>
<div style="position:absolute;left:618px;top:145px;width:1px;height:25px;background:#d8d8d8;"></div>
<div style="position:absolute;left:708px;top:145px;width:1px;height:25px;background:#d8d8d8;"></div>
<div style="position:absolute;left:778px;top:145px;width:1px;height:25px;background:#d8d8d8;"></div>
<div style="position:absolute;left:848px;top:145px;width:1px;height:25px;background:#d8d8d8;"></div>
<div style="position:absolute;left:15px;top:170px;width:856px;height:2px;background:#a8a8a8;"></div>
<div style="position:absolute;left:21px;top:157px;width:9px;height:1px;background:#6e6e6e;"></div>
<div style="position:absolute;left:21px;top:160px;width:9px;height:1px;background:#6e6e6e;"></div>
<div style="position:absolute;left:276px;top:157px;width:9px;height:1px;background:#6e6e6e;"></div>
<div style="position:absolute;left:276px;top:160px;width:9px;height:1px;background:#6e6e6e;"></div>
<div style="position:absolute;left:348px;top:157px;width:9px;height:1px;background:#6e6e6e;"></div>
<div style="position:absolute;left:348px;top:160px;width:9px;height:1px;background:#6e6e6e;"></div>
<div style="position:absolute;left:450px;top:157px;width:9px;height:1px;background:#6e6e6e;"></div>
<div style="position:absolute;left:450px;top:160px;width:9px;height:1px;background:#6e6e6e;"></div>
<div style="position:absolute;left:550px;top:157px;width:9px;height:1px;background:#6e6e6e;"></div>
<div style="position:absolute;left:550px;top:160px;width:9px;height:1px;background:#6e6e6e;"></div>
<div style="position:absolute;left:624px;top:157px;width:9px;height:1px;background:#6e6e6e;"></div>
<div style="position:absolute;left:624px;top:160px;width:9px;height:1px;background:#6e6e6e;"></div>
<div style="position:absolute;left:714px;top:157px;width:9px;height:1px;background:#6e6e6e;"></div>
<div style="position:absolute;left:714px;top:160px;width:9px;height:1px;background:#6e6e6e;"></div>
<div style="position:absolute;left:784px;top:157px;width:9px;height:1px;background:#6e6e6e;"></div>
<div style="position:absolute;left:784px;top:160px;width:9px;height:1px;background:#6e6e6e;"></div>
<div style="position:absolute;left:854px;top:157px;width:9px;height:1px;background:#6e6e6e;"></div>
<div style="position:absolute;left:854px;top:160px;width:9px;height:1px;background:#6e6e6e;"></div>
<div class="t" style="left:582px;width:30px;text-align:right;top:150.84px;font-size:12px;line-height:16px;color:#1e1e1e;">-</div>
<div class="t" style="left:744px;width:30px;text-align:right;top:150.03px;font-size:12.9px;line-height:17px;color:#1e1e1e;">0</div>
<div class="t" style="left:814px;width:30px;text-align:right;top:150.03px;font-size:12.9px;line-height:17px;color:#1e1e1e;">0</div>
<div style="position:absolute;left:0px;top:178px;width:871px;height:1px;background:#a0a0a0;"></div>
<div style="position:absolute;left:15px;top:179px;width:856px;height:42px;background:#d3d3d3;"></div>
<div style="position:absolute;left:343px;top:179px;width:101px;height:42px;background:#dcdcdc;"></div>
<div style="position:absolute;left:15px;top:221px;width:856px;height:1px;background:#cacaca;"></div>
<div style="position:absolute;left:0px;top:221px;width:14px;height:1px;background:#a0a0a0;"></div>
<div style="position:absolute;left:124px;top:179px;width:1px;height:42px;background:#cacaca;"></div>
<div style="position:absolute;left:270px;top:179px;width:1px;height:42px;background:#cacaca;"></div>
<div style="position:absolute;left:342px;top:179px;width:1px;height:42px;background:#cacaca;"></div>
<div style="position:absolute;left:444px;top:179px;width:1px;height:42px;background:#cacaca;"></div>
<div style="position:absolute;left:544px;top:179px;width:1px;height:42px;background:#cacaca;"></div>
<div style="position:absolute;left:618px;top:179px;width:1px;height:42px;background:#cacaca;"></div>
<div style="position:absolute;left:708px;top:179px;width:1px;height:42px;background:#cacaca;"></div>
<div style="position:absolute;left:778px;top:179px;width:1px;height:42px;background:#cacaca;"></div>
<div style="position:absolute;left:848px;top:179px;width:1px;height:42px;background:#cacaca;"></div>
<div class="t" style="left:19px;top:192.03px;font-size:12.9px;line-height:17px;color:#1e1e1e;">Podstawowa</div>
<div class="t" style="left:129px;top:192.03px;font-size:12.9px;line-height:17px;color:#1e1e1e;">Lista płac</div>
<div class="t" style="left:275px;top:192.03px;font-size:12.9px;line-height:17px;color:#1e1e1e;">1/2022</div>
<div class="t" style="left:343.5px;width:100px;text-align:center;top:183.53px;font-size:12.9px;line-height:17px;color:#1e1e1e;">2022-03-18</div>
<div class="t" style="left:343.5px;width:100px;text-align:center;top:200.53px;font-size:12.9px;line-height:17px;color:#1e1e1e;">21:44:02</div>
<div class="t" style="left:444.5px;width:100px;text-align:center;top:183.53px;font-size:12.9px;line-height:17px;color:#1e1e1e;">2023-01-29</div>
<div class="t" style="left:444.5px;width:100px;text-align:center;top:200.53px;font-size:12.9px;line-height:17px;color:#1e1e1e;">20:43:52</div>
<div class="t" style="left:554px;width:60px;text-align:right;top:192.03px;font-size:12.9px;line-height:17px;color:#1e1e1e;">2</div>
<div class="t" style="left:629px;top:192.03px;font-size:12.9px;line-height:17px;color:#1e1e1e;">2022-01-31</div>
<div class="t" style="left:713px;width:60px;text-align:right;top:192.03px;font-size:12.9px;line-height:17px;color:#1e1e1e;">2022</div>
<div class="t" style="left:783px;width:60px;text-align:right;top:192.03px;font-size:12.9px;line-height:17px;color:#1e1e1e;">1</div>
<div class="t" style="left:860px;top:192.03px;font-size:12.9px;line-height:17px;color:#1e1e1e;">2022-01-31</div>
<div style="position:absolute;left:15px;top:222px;width:856px;height:42px;background:#ffffff;"></div>
<div style="position:absolute;left:15px;top:264px;width:856px;height:1px;background:#cacaca;"></div>
<div style="position:absolute;left:0px;top:264px;width:14px;height:1px;background:#a0a0a0;"></div>
<div style="position:absolute;left:124px;top:222px;width:1px;height:42px;background:#cacaca;"></div>
<div style="position:absolute;left:270px;top:222px;width:1px;height:42px;background:#cacaca;"></div>
<div style="position:absolute;left:342px;top:222px;width:1px;height:42px;background:#cacaca;"></div>
<div style="position:absolute;left:444px;top:222px;width:1px;height:42px;background:#cacaca;"></div>
<div style="position:absolute;left:544px;top:222px;width:1px;height:42px;background:#cacaca;"></div>
<div style="position:absolute;left:618px;top:222px;width:1px;height:42px;background:#cacaca;"></div>
<div style="position:absolute;left:708px;top:222px;width:1px;height:42px;background:#cacaca;"></div>
<div style="position:absolute;left:778px;top:222px;width:1px;height:42px;background:#cacaca;"></div>
<div style="position:absolute;left:848px;top:222px;width:1px;height:42px;background:#cacaca;"></div>
<div class="t" style="left:19px;top:235.03px;font-size:12.9px;line-height:17px;color:#1e1e1e;">Podstawowa</div>
<div class="t" style="left:129px;top:235.03px;font-size:12.9px;line-height:17px;color:#1e1e1e;">Lista płac</div>
<div class="t" style="left:275px;top:235.03px;font-size:12.9px;line-height:17px;color:#1e1e1e;">2/2022</div>
<div class="t" style="left:343.5px;width:100px;text-align:center;top:226.53px;font-size:12.9px;line-height:17px;color:#1e1e1e;">2022-03-23</div>
<div class="t" style="left:343.5px;width:100px;text-align:center;top:243.53px;font-size:12.9px;line-height:17px;color:#1e1e1e;">00:01:55</div>
<div class="t" style="left:444.5px;width:100px;text-align:center;top:226.53px;font-size:12.9px;line-height:17px;color:#1e1e1e;">2022-11-03</div>
<div class="t" style="left:444.5px;width:100px;text-align:center;top:243.53px;font-size:12.9px;line-height:17px;color:#1e1e1e;">17:39:29</div>
<div class="t" style="left:554px;width:60px;text-align:right;top:235.03px;font-size:12.9px;line-height:17px;color:#1e1e1e;">2</div>
<div class="t" style="left:629px;top:235.03px;font-size:12.9px;line-height:17px;color:#1e1e1e;">2022-02-28</div>
<div class="t" style="left:713px;width:60px;text-align:right;top:235.03px;font-size:12.9px;line-height:17px;color:#1e1e1e;">2022</div>
<div class="t" style="left:783px;width:60px;text-align:right;top:235.03px;font-size:12.9px;line-height:17px;color:#1e1e1e;">2</div>
<div class="t" style="left:860px;top:235.03px;font-size:12.9px;line-height:17px;color:#1e1e1e;">2022-01-31</div>
<div style="position:absolute;left:15px;top:265px;width:856px;height:42px;background:#dcdcdc;"></div>
<div style="position:absolute;left:15px;top:307px;width:856px;height:1px;background:#cacaca;"></div>
<div style="position:absolute;left:0px;top:307px;width:14px;height:1px;background:#a0a0a0;"></div>
<div style="position:absolute;left:124px;top:265px;width:1px;height:42px;background:#cacaca;"></div>
<div style="position:absolute;left:270px;top:265px;width:1px;height:42px;background:#cacaca;"></div>
<div style="position:absolute;left:342px;top:265px;width:1px;height:42px;background:#cacaca;"></div>
<div style="position:absolute;left:444px;top:265px;width:1px;height:42px;background:#cacaca;"></div>
<div style="position:absolute;left:544px;top:265px;width:1px;height:42px;background:#cacaca;"></div>
<div style="position:absolute;left:618px;top:265px;width:1px;height:42px;background:#cacaca;"></div>
<div style="position:absolute;left:708px;top:265px;width:1px;height:42px;background:#cacaca;"></div>
<div style="position:absolute;left:778px;top:265px;width:1px;height:42px;background:#cacaca;"></div>
<div style="position:absolute;left:848px;top:265px;width:1px;height:42px;background:#cacaca;"></div>
<div class="t" style="left:19px;top:278.03px;font-size:12.9px;line-height:17px;color:#1e1e1e;">Podstawowa</div>
<div class="t" style="left:129px;top:278.03px;font-size:12.9px;line-height:17px;color:#1e1e1e;">Lista płac</div>
<div class="t" style="left:275px;top:278.03px;font-size:12.9px;line-height:17px;color:#1e1e1e;">3/2022</div>
<div class="t" style="left:343.5px;width:100px;text-align:center;top:269.53px;font-size:12.9px;line-height:17px;color:#1e1e1e;">2022-03-23</div>
<div class="t" style="left:343.5px;width:100px;text-align:center;top:286.53px;font-size:12.9px;line-height:17px;color:#1e1e1e;">18:41:20</div>
<div class="t" style="left:444.5px;width:100px;text-align:center;top:269.53px;font-size:12.9px;line-height:17px;color:#1e1e1e;">2022-11-22</div>
<div class="t" style="left:444.5px;width:100px;text-align:center;top:286.53px;font-size:12.9px;line-height:17px;color:#1e1e1e;">20:16:57</div>
<div class="t" style="left:554px;width:60px;text-align:right;top:278.03px;font-size:12.9px;line-height:17px;color:#1e1e1e;">2</div>
<div class="t" style="left:629px;top:278.03px;font-size:12.9px;line-height:17px;color:#1e1e1e;">2022-03-31</div>
<div class="t" style="left:713px;width:60px;text-align:right;top:278.03px;font-size:12.9px;line-height:17px;color:#1e1e1e;">2022</div>
<div class="t" style="left:783px;width:60px;text-align:right;top:278.03px;font-size:12.9px;line-height:17px;color:#1e1e1e;">3</div>
<div class="t" style="left:860px;top:278.03px;font-size:12.9px;line-height:17px;color:#1e1e1e;">2022-01-31</div>
<div style="position:absolute;left:15px;top:308px;width:856px;height:42px;background:#ffffff;"></div>
<div style="position:absolute;left:15px;top:350px;width:856px;height:1px;background:#cacaca;"></div>
<div style="position:absolute;left:0px;top:350px;width:14px;height:1px;background:#a0a0a0;"></div>
<div style="position:absolute;left:124px;top:308px;width:1px;height:42px;background:#cacaca;"></div>
<div style="position:absolute;left:270px;top:308px;width:1px;height:42px;background:#cacaca;"></div>
<div style="position:absolute;left:342px;top:308px;width:1px;height:42px;background:#cacaca;"></div>
<div style="position:absolute;left:444px;top:308px;width:1px;height:42px;background:#cacaca;"></div>
<div style="position:absolute;left:544px;top:308px;width:1px;height:42px;background:#cacaca;"></div>
<div style="position:absolute;left:618px;top:308px;width:1px;height:42px;background:#cacaca;"></div>
<div style="position:absolute;left:708px;top:308px;width:1px;height:42px;background:#cacaca;"></div>
<div style="position:absolute;left:778px;top:308px;width:1px;height:42px;background:#cacaca;"></div>
<div style="position:absolute;left:848px;top:308px;width:1px;height:42px;background:#cacaca;"></div>
<div class="t" style="left:19px;top:321.03px;font-size:12.9px;line-height:17px;color:#1e1e1e;">Podstawowa</div>
<div class="t" style="left:129px;top:321.03px;font-size:12.9px;line-height:17px;color:#1e1e1e;">Lista płac</div>
<div class="t" style="left:275px;top:321.03px;font-size:12.9px;line-height:17px;color:#1e1e1e;">4/2022</div>
<div class="t" style="left:343.5px;width:100px;text-align:center;top:312.53px;font-size:12.9px;line-height:17px;color:#1e1e1e;">2022-04-27</div>
<div class="t" style="left:343.5px;width:100px;text-align:center;top:329.53px;font-size:12.9px;line-height:17px;color:#1e1e1e;">22:53:15</div>
<div class="t" style="left:444.5px;width:100px;text-align:center;top:312.53px;font-size:12.9px;line-height:17px;color:#1e1e1e;">2022-11-27</div>
<div class="t" style="left:444.5px;width:100px;text-align:center;top:329.53px;font-size:12.9px;line-height:17px;color:#1e1e1e;">16:22:28</div>
<div class="t" style="left:554px;width:60px;text-align:right;top:321.03px;font-size:12.9px;line-height:17px;color:#1e1e1e;">2</div>
<div class="t" style="left:629px;top:321.03px;font-size:12.9px;line-height:17px;color:#1e1e1e;">2022-04-30</div>
<div class="t" style="left:713px;width:60px;text-align:right;top:321.03px;font-size:12.9px;line-height:17px;color:#1e1e1e;">2022</div>
<div class="t" style="left:783px;width:60px;text-align:right;top:321.03px;font-size:12.9px;line-height:17px;color:#1e1e1e;">4</div>
<div class="t" style="left:860px;top:321.03px;font-size:12.9px;line-height:17px;color:#1e1e1e;">2022-01-31</div>
<div style="position:absolute;left:15px;top:351px;width:856px;height:42px;background:#dcdcdc;"></div>
<div style="position:absolute;left:15px;top:393px;width:856px;height:1px;background:#cacaca;"></div>
<div style="position:absolute;left:0px;top:393px;width:14px;height:1px;background:#a0a0a0;"></div>
<div style="position:absolute;left:124px;top:351px;width:1px;height:42px;background:#cacaca;"></div>
<div style="position:absolute;left:270px;top:351px;width:1px;height:42px;background:#cacaca;"></div>
<div style="position:absolute;left:342px;top:351px;width:1px;height:42px;background:#cacaca;"></div>
<div style="position:absolute;left:444px;top:351px;width:1px;height:42px;background:#cacaca;"></div>
<div style="position:absolute;left:544px;top:351px;width:1px;height:42px;background:#cacaca;"></div>
<div style="position:absolute;left:618px;top:351px;width:1px;height:42px;background:#cacaca;"></div>
<div style="position:absolute;left:708px;top:351px;width:1px;height:42px;background:#cacaca;"></div>
<div style="position:absolute;left:778px;top:351px;width:1px;height:42px;background:#cacaca;"></div>
<div style="position:absolute;left:848px;top:351px;width:1px;height:42px;background:#cacaca;"></div>
<div class="t" style="left:19px;top:364.03px;font-size:12.9px;line-height:17px;color:#1e1e1e;">Podstawowa</div>
<div class="t" style="left:129px;top:364.03px;font-size:12.9px;line-height:17px;color:#1e1e1e;">Lista płac</div>
<div class="t" style="left:275px;top:364.03px;font-size:12.9px;line-height:17px;color:#1e1e1e;">5/2022</div>
<div class="t" style="left:343.5px;width:100px;text-align:center;top:355.53px;font-size:12.9px;line-height:17px;color:#1e1e1e;">2022-10-20</div>
<div class="t" style="left:343.5px;width:100px;text-align:center;top:372.53px;font-size:12.9px;line-height:17px;color:#1e1e1e;">10:48:18</div>
<div class="t" style="left:444.5px;width:100px;text-align:center;top:355.53px;font-size:12.9px;line-height:17px;color:#1e1e1e;">2023-01-29</div>
<div class="t" style="left:444.5px;width:100px;text-align:center;top:372.53px;font-size:12.9px;line-height:17px;color:#1e1e1e;">20:26:38</div>
<div class="t" style="left:554px;width:60px;text-align:right;top:364.03px;font-size:12.9px;line-height:17px;color:#1e1e1e;">1</div>
<div class="t" style="left:629px;top:364.03px;font-size:12.9px;line-height:17px;color:#1e1e1e;">2022-10-31</div>
<div class="t" style="left:713px;width:60px;text-align:right;top:364.03px;font-size:12.9px;line-height:17px;color:#1e1e1e;">2022</div>
<div class="t" style="left:783px;width:60px;text-align:right;top:364.03px;font-size:12.9px;line-height:17px;color:#1e1e1e;">10</div>
<div class="t" style="left:860px;top:364.03px;font-size:12.9px;line-height:17px;color:#1e1e1e;">2022-01-31</div>
<div style="position:absolute;left:15px;top:394px;width:856px;height:2px;background:#ffffff;"></div>
<div style="position:absolute;left:124px;top:394px;width:1px;height:2px;background:#cacaca;"></div>
<div style="position:absolute;left:270px;top:394px;width:1px;height:2px;background:#cacaca;"></div>
<div style="position:absolute;left:342px;top:394px;width:1px;height:2px;background:#cacaca;"></div>
<div style="position:absolute;left:444px;top:394px;width:1px;height:2px;background:#cacaca;"></div>
<div style="position:absolute;left:544px;top:394px;width:1px;height:2px;background:#cacaca;"></div>
<div style="position:absolute;left:618px;top:394px;width:1px;height:2px;background:#cacaca;"></div>
<div style="position:absolute;left:708px;top:394px;width:1px;height:2px;background:#cacaca;"></div>
<div style="position:absolute;left:778px;top:394px;width:1px;height:2px;background:#cacaca;"></div>
<div style="position:absolute;left:848px;top:394px;width:1px;height:2px;background:#cacaca;"></div>
<svg style="position:absolute;left:5px;top:196px;" width="5" height="8" viewBox="0 0 5 8"><path d="M0 0L4.5 4L0 8Z" fill="#6e6e6e"/></svg>
<svg style="position:absolute;left:2px;top:157px;" width="10" height="10" viewBox="0 0 10 10"><path d="M0 0H10L6 4.5V9H4V4.5Z" fill="#6e6e6e"/></svg>
<svg style="position:absolute;left:2px;top:26px;" width="10" height="10" viewBox="0 0 10 10"><g stroke="#f39a55" stroke-width="1.2"><path d="M5 0.5V9.5M0.5 5H9.5"/></g><g stroke="#f07a30" stroke-width="1.1"><path d="M2.2 2.2L7.8 7.8M7.8 2.2L2.2 7.8"/></g></svg>
<svg style="position:absolute;left:2px;top:98px;" width="10" height="10" viewBox="0 0 10 10"><g stroke="#f39a55" stroke-width="1.2"><path d="M5 0.5V9.5M0.5 5H9.5"/></g><g stroke="#f07a30" stroke-width="1.1"><path d="M2.2 2.2L7.8 7.8M7.8 2.2L2.2 7.8"/></g></svg>
</div>
<div style="position:absolute;left:1297px;top:221px;width:17px;height:499px;background:#dcdcdc;border-left:1px solid #ababab;border-right:1px solid #ababab;box-sizing:border-box"></div>
<div style="position:absolute;left:1297px;top:221px;width:17px;height:17px;background:#ffffff;border:1px solid #ababab;box-sizing:border-box"></div>
<div style="position:absolute;left:1297px;top:238px;width:17px;height:377px;background:#ffffff;border-left:1px solid #ababab;border-right:1px solid #ababab;border-bottom:1px solid #ababab;box-sizing:border-box"></div>
<div style="position:absolute;left:1297px;top:687px;width:17px;height:16px;background:#ffffff;border:1px solid #ababab;box-sizing:border-box"></div>
<div style="position:absolute;left:1297px;top:703px;width:17px;height:17px;background:#f0f0f0;border:1px solid #ababab;box-sizing:border-box"></div>
<svg style="position:absolute;left:1301px;top:226px;" width="10" height="6" viewBox="0 0 10 6"><path d="M5 0L9 5H1Z" fill="#6e6e6e"/></svg>
<svg style="position:absolute;left:1301px;top:692px;" width="10" height="6" viewBox="0 0 10 6"><path d="M1 0H9L5 5Z" fill="#6e6e6e"/></svg>
<div style="position:absolute;left:426px;top:703px;width:871px;height:17px;background:#dcdcdc;border-top:1px solid #ababab;box-sizing:border-box"></div>
<div style="position:absolute;left:426px;top:703px;width:17px;height:17px;background:#ffffff;border:1px solid #ababab;box-sizing:border-box"></div>
<div style="position:absolute;left:442px;top:703px;width:90px;height:17px;background:#ffffff;border:1px solid #ababab;box-sizing:border-box"></div>
<div style="position:absolute;left:1280px;top:703px;width:17px;height:17px;background:#ffffff;border:1px solid #ababab;box-sizing:border-box"></div>
<svg style="position:absolute;left:431px;top:708px;" width="6" height="10" viewBox="0 0 6 10"><path d="M5 0V8L0 4Z" fill="#6e6e6e"/></svg>
<svg style="position:absolute;left:1286px;top:708px;" width="6" height="10" viewBox="0 0 6 10"><path d="M0 0V8L5 4Z" fill="#6e6e6e"/></svg>
<div style="position:absolute;left:411px;top:466px;width:2px;height:2px;background:#505050;"></div>
<div style="position:absolute;left:411px;top:469px;width:2px;height:2px;background:#505050;"></div>
<div style="position:absolute;left:411px;top:472px;width:2px;height:2px;background:#505050;"></div>
<div style="position:absolute;left:7px;top:734px;width:1321px;height:19px;background:#dcdcdc;border-top:1px solid #c8c8c8;box-sizing:border-box"></div>
<div class="t" style="left:29.5px;top:736.91px;font-size:11.8px;line-height:15px;color:#1e1e1e;">Obiektów: 6</div>
<div class="t" style="left:156px;top:737.65px;font-size:11.1px;line-height:14px;color:#1e1e1e;">Licencja dla: NEONET CONSULTING S.C.</div>
<div class="t" style="left:519px;top:736.31px;font-size:12.1px;line-height:16px;color:#1e1e1e;">taxmachine.pl</div>
<div class="t" style="left:666px;top:737.76px;font-size:10.8px;line-height:14px;color:#1e1e1e;">3.26.1.4245</div>
<div class="t" style="left:773px;top:737.08px;font-size:11.3px;line-height:15px;color:#1e1e1e;">Baza SQLite 3.40.0: &quot;LocalDB.db&quot;.</div>
<div class="t" style="left:1101px;top:736.98px;font-size:11.6px;line-height:15px;color:#1e1e1e;">Aktualizacje: 2062-11-26</div>
<div style="position:absolute;left:131px;top:736px;width:1px;height:15px;background:#a8a8a8;"></div>
<div style="position:absolute;left:494px;top:736px;width:1px;height:15px;background:#a8a8a8;"></div>
<div style="position:absolute;left:642px;top:736px;width:1px;height:15px;background:#a8a8a8;"></div>
<div style="position:absolute;left:748px;top:736px;width:1px;height:15px;background:#a8a8a8;"></div>
<div style="position:absolute;left:1077px;top:736px;width:1px;height:15px;background:#a8a8a8;"></div>
<svg style="position:absolute;left:23px;top:188px" width="16" height="16" viewBox="0 0 16 16"><path d="M0.5 3H5L6 4.3H13V14.5H0.5Z" fill="#e8a820"/><rect x="3.5" y="0.5" width="7.5" height="7.5" fill="#f6f6f6" stroke="#9a9a9a" stroke-width="0.7"/><rect x="5" y="1.8" width="7.5" height="7" fill="#fcfcfc" stroke="#a6a6a6" stroke-width="0.7"/><path d="M2.3 6.8H15.5L13.5 14.5H0.5Z" fill="#fbc93e"/></svg>
<svg style="position:absolute;left:47.2px;top:193px;" width="4" height="7" viewBox="0 0 4 7"><path d="M0 0L3.5 3.5L0 7Z" fill="#1e1e1e"/></svg>
<svg style="position:absolute;left:107.7px;top:193px;" width="4" height="7" viewBox="0 0 4 7"><path d="M0 0L3.5 3.5L0 7Z" fill="#1e1e1e"/></svg>
<svg style="position:absolute;left:222.2px;top:193px;" width="4" height="7" viewBox="0 0 4 7"><path d="M0 0L3.5 3.5L0 7Z" fill="#1e1e1e"/></svg>
<svg style="position:absolute;left:282.2px;top:193px;" width="4" height="7" viewBox="0 0 4 7"><path d="M0 0L3.5 3.5L0 7Z" fill="#1e1e1e"/></svg>
<svg style="position:absolute;left:1097px;top:189px;" width="16" height="15" viewBox="0 0 16 15"><circle cx="6.3" cy="6.3" r="5.2" fill="none" stroke="#333" stroke-width="1.3"/><path d="M10 10L14.5 14.3" stroke="#333" stroke-width="1.5"/></svg>
<svg style="position:absolute;left:1254px;top:190px;" width="16" height="15" viewBox="0 0 16 15"><rect x="0.75" y="0.75" width="13.5" height="13" rx="3" fill="none" stroke="#333" stroke-width="1.4"/><path d="M5.2 0.8V13.8M9.8 0.8V13.8M0.8 5H14.2M0.8 9.5H14.2" stroke="#333" stroke-width="1.1"/></svg>
<svg style="position:absolute;left:1293px;top:192px;" width="15" height="10" viewBox="0 0 15 10"><path d="M0 1H14" stroke="#8a8a8a" stroke-width="1.2"/><path d="M2.6 4.6H11.4" stroke="#8a8a8a" stroke-width="1.2"/><path d="M4.8 8.4H9.2" stroke="#222" stroke-width="1.3"/></svg>
<svg style="position:absolute;left:1276px;top:238.5px;" width="9" height="11" viewBox="0 0 9 11"><circle cx="5.8" cy="3.6" r="2.8" fill="none" stroke="#555" stroke-width="1.1"/><path d="M3.8 5.6L0.8 9.8" stroke="#555" stroke-width="1.4"/></svg>
<svg style="position:absolute;left:554px;top:421px;" width="17" height="12" viewBox="0 0 17 12"><text x="0.5" y="8" font-family="Liberation Mono" font-size="6.5" font-weight="bold" fill="#555">A</text><rect x="5" y="0" width="7" height="11" rx="1" fill="#2b9a48"/><rect x="6.7" y="2.6" width="3.6" height="6" fill="#ffffff"/><rect x="8" y="4" width="1" height="1" fill="#2b9a48"/><rect x="8" y="6.3" width="1" height="1" fill="#2b9a48"/><text x="12.6" y="8" font-family="Liberation Mono" font-size="6.5" font-weight="bold" fill="#555">C</text></svg>
<svg style="position:absolute;left:11px;top:736px;" width="13" height="15" viewBox="0 0 13 15"><path d="M0.7 0.7H8L12.3 5V14.3H0.7Z" fill="#e4e4e4" stroke="#333" stroke-width="1.1" stroke-linejoin="round"/><path d="M7.6 0.7V5.2H12.2" fill="none" stroke="#333" stroke-width="1"/></svg>
<svg style="position:absolute;left:136px;top:736px;" width="16" height="15" viewBox="0 0 16 15"><path d="M11 10.5H1.5A1 1 0 0 1 0.6 9.5V1.6A1 1 0 0 1 1.6 0.6H13.4A1 1 0 0 1 14.4 1.6V6" fill="none" stroke="#333" stroke-width="1.1"/><path d="M3 4H11M3 7H8" stroke="#333" stroke-width="1"/><rect x="10.5" y="8" width="4.5" height="6.5" rx="1" fill="#333"/><rect x="11.8" y="10.5" width="2" height="3" fill="#ddd"/></svg>
<svg style="position:absolute;left:499px;top:735px;" width="16" height="16" viewBox="0 0 16 16"><circle cx="8" cy="8" r="7.2" fill="none" stroke="#222" stroke-width="1.2"/><ellipse cx="8" cy="8" rx="3.2" ry="7.2" fill="none" stroke="#222" stroke-width="1.1"/><path d="M0.8 8H15.2M2 4.3H14M2 11.7H14" stroke="#222" stroke-width="1.1"/></svg>
<svg style="position:absolute;left:647px;top:736px;" width="15" height="15" viewBox="0 0 15 15"><path d="M5 0.5L3.2 14.5M11 0.5L9.2 14.5M0.5 4.8H14.5M0 10H14" stroke="#222" stroke-width="1.3"/></svg>
<svg style="position:absolute;left:754px;top:735px;" width="14" height="16" viewBox="0 0 14 16"><ellipse cx="7" cy="3" rx="6.2" ry="2.4" fill="none" stroke="#222" stroke-width="1.1"/><path d="M0.8 3V13A6.2 2.4 0 0 0 13.2 13V3" fill="none" stroke="#222" stroke-width="1.1"/></svg>
<svg style="position:absolute;left:1082px;top:736px;" width="16" height="16" viewBox="0 0 16 16"><path d="M8 13.8H2A1.3 1.3 0 0 1 0.7 12.5V2A1.3 1.3 0 0 1 2 0.7H12A1.3 1.3 0 0 1 13.3 2V7.5" fill="none" stroke="#333" stroke-width="1.1"/><path d="M0.8 3.8H13.2" stroke="#333" stroke-width="1.1"/><circle cx="11.8" cy="11.8" r="3.8" fill="#333"/><path d="M10 11.5A1.9 1.9 0 0 1 13.5 11M13.6 12.3A1.9 1.9 0 0 1 10.1 12.8" fill="none" stroke="#fff" stroke-width="0.8"/></svg>
<div style="position:absolute;left:1321px;top:738px;width:2px;height:2px;background:#a8a8a8;"></div>
<div style="position:absolute;left:1321px;top:742px;width:2px;height:2px;background:#a8a8a8;"></div>
<div style="position:absolute;left:1317px;top:742px;width:2px;height:2px;background:#a8a8a8;"></div>
<div style="position:absolute;left:1321px;top:746px;width:2px;height:2px;background:#a8a8a8;"></div>
<div style="position:absolute;left:1317px;top:746px;width:2px;height:2px;background:#a8a8a8;"></div>
<div style="position:absolute;left:1313px;top:746px;width:2px;height:2px;background:#a8a8a8;"></div>
</body></html>
